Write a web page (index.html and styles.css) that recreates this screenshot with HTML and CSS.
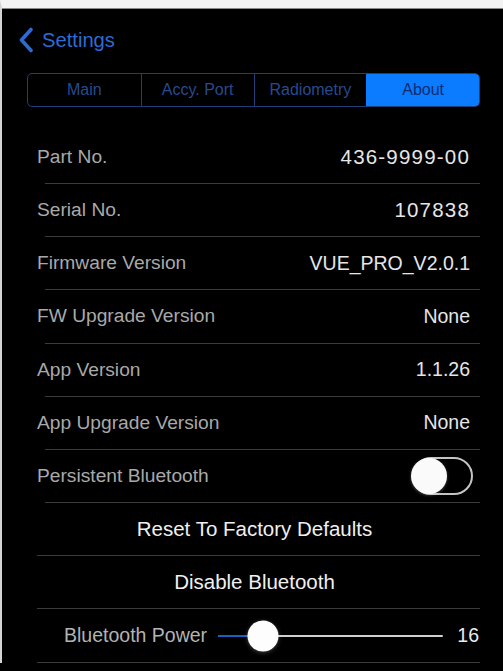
FILE: index.html
```html
<!DOCTYPE html>
<html>
<head>
<meta charset="utf-8">
<link rel="stylesheet" href="styles.css">
</head>
<body>
<div class="frame">
  <header class="nav">
    <svg class="chev" width="16" height="26" viewBox="0 0 16 26"><path d="M13 2.5 L3.5 13 L13 23.5" fill="none" stroke="#2c6cd4" stroke-width="3.6" stroke-linecap="round" stroke-linejoin="round"/></svg>
    <span class="back">Settings</span>
  </header>
  <div class="seg">
    <div class="seg-item">Main</div>
    <div class="seg-item">Accy. Port</div>
    <div class="seg-item">Radiometry</div>
    <div class="seg-item active">About</div>
  </div>
  <div class="list">
    <div class="row"><span class="label">Part No.</span><span class="value num">436-9999-00</span></div>
    <div class="row"><span class="label">Serial No.</span><span class="value num">107838</span></div>
    <div class="row"><span class="label">Firmware Version</span><span class="value">VUE_PRO_V2.0.1</span></div>
    <div class="row"><span class="label">FW Upgrade Version</span><span class="value">None</span></div>
    <div class="row"><span class="label">App Version</span><span class="value">1.1.26</span></div>
    <div class="row"><span class="label">App Upgrade Version</span><span class="value">None</span></div>
    <div class="row"><span class="label">Persistent Bluetooth</span><span class="switch"><span class="knob"></span></span></div>
    <div class="row btn wide-sep">Reset To Factory Defaults</div>
    <div class="row btn wide-sep">Disable Bluetooth</div>
    <div class="row power wide-sep">
      <span class="label">Bluetooth Power</span>
      <span class="slider"><span class="fill" style="width:20%"></span><span class="thumb" style="left:20%"></span></span>
      <span class="value">16</span>
    </div>
  </div>
</div>
</body>
</html>
```
FILE: styles.css
```css
html, body {
  margin: 0;
  padding: 0;
  background: #000;
}
body {
  width: 503px;
  height: 671px;
  overflow: hidden;
  font-family: "Liberation Sans", Arial, sans-serif;
}
.frame {
  border-top: 8px solid #f3f3f3;
  border-left: 2px solid #d4d4d4;
  height: 663px;
  box-sizing: border-box;
  background: #000;
  box-shadow: inset 0 1px 0 #8a8a8a;
}
.nav {
  height: 64px;
  display: flex;
  align-items: center;
  padding-left: 16px;
  box-sizing: border-box;
}
.chev {
  display: block;
  margin-right: 8px;
}
.back {
  color: #2c6cd4;
  font-size: 20.2px;
  line-height: 24px;
}
.seg {
  margin: 1px 23px 0 25px;
  height: 34px;
  display: grid;
  grid-template-columns: repeat(4, 1fr);
  border: 1px solid #213e78;
  border-radius: 5px;
  overflow: hidden;
  box-sizing: border-box;
}
.seg-item {
  display: flex;
  align-items: center;
  justify-content: center;
  color: #284a8e;
  font-size: 16px;
  border-left: 1px solid #213e78;
}
.seg-item:first-child {
  border-left: none;
}
.seg-item.active {
  background: #0b7bff;
  color: #0c2c70;
  border-left-color: #0b7bff;
}
.list {
  margin-top: 23.8px;
}
.row {
  height: 53.2px;
  display: flex;
  align-items: center;
  justify-content: space-between;
  padding: 0 33px 1px 35px;
  box-sizing: border-box;
  background: linear-gradient(#3b3b3b, #3b3b3b) no-repeat;
  background-size: calc(100% - 43px - 23px) 1px;
  background-position: 43px 100%;
}
.row.wide-sep {
  background-size: calc(100% - 35px - 23px) 1px;
  background-position: 35px 100%;
}
.label {
  color: #a9a9a9;
  font-size: 19.2px;
}
.value {
  color: #e6e6e6;
  font-size: 19.5px;
}
.value.num {
  font-size: 20.5px;
  letter-spacing: 1.2px;
}
.switch {
  width: 61px;
  height: 38px;
  border: 2px solid #c4c4c4;
  border-radius: 19px;
  box-sizing: border-box;
  display: flex;
  align-items: center;
  margin-right: -3px;
  position: relative;
}
.knob {
  width: 36px;
  height: 36px;
  margin-left: -3px;
  border-radius: 50%;
  background: #fafafa;
  box-shadow: 0 1px 3px rgba(255,255,255,0.3);
}
.btn {
  justify-content: center;
  color: #f0f0f0;
  font-size: 20.5px;
  padding: 0 23px 1px 27px;
}
.power {
  padding: 0 24px 1px 62px;
}
.power .label {
  color: #b3b3b3;
  font-size: 19.5px;
}
.slider {
  flex: 1;
  height: 2px;
  margin: 0 14px 0 11px;
  background: #cfcfcf;
  position: relative;
  border-radius: 1px;
}
.fill {
  position: absolute;
  left: 0;
  top: 0;
  height: 2px;
  background: #1c5fc4;
}
.thumb {
  position: absolute;
  top: 1px;
  width: 31px;
  height: 31px;
  border-radius: 50%;
  background: #fdfdfd;
  transform: translate(-50%, -50%);
  box-shadow: 0 1px 4px rgba(255,255,255,0.25);
}
.power .value {
  color: #ececec;
}
```
